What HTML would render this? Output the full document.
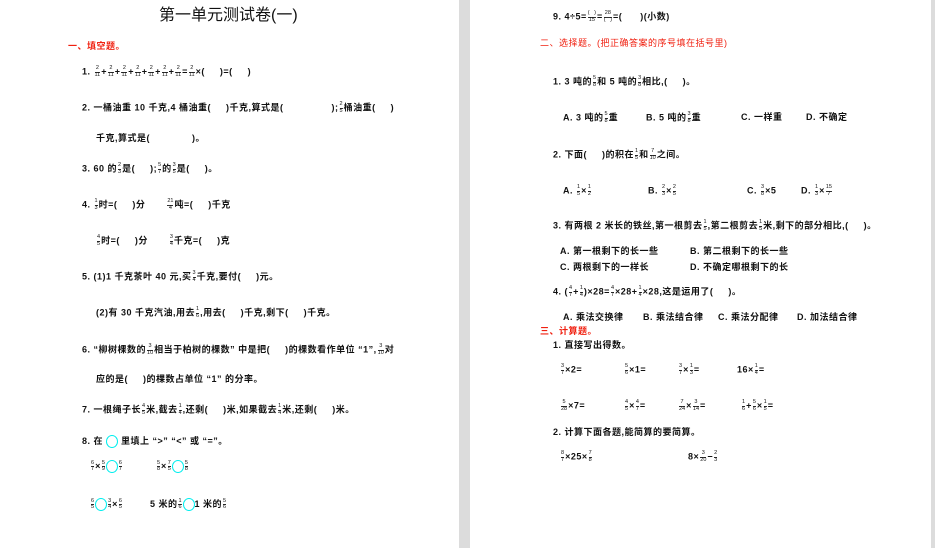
<!DOCTYPE html>
<html><head><meta charset="utf-8"><style>
body{margin:0;width:935px;height:548px;background:#dcdcdc;position:relative;overflow:hidden;font-family:"Liberation Sans","Noto Sans CJK SC",sans-serif;color:#111}
.pg{position:absolute;top:0;background:#fff;height:548px}
.t{position:absolute;font-size:9px;letter-spacing:0.5px;white-space:nowrap;line-height:11px;font-weight:bold}
.r{color:#f02010}
.f{display:inline-block;vertical-align:middle;font-size:5.5px;line-height:5.5px;text-align:center;margin:0 1px;font-weight:normal;letter-spacing:0}
.f b{display:block;font-weight:normal;border-bottom:0.5px solid #333}
.f i{display:block;font-style:normal}
.c{display:inline-block;width:12px;height:13px;border:1.5px solid #0ee;border-radius:50%;vertical-align:middle;box-sizing:border-box}
</style></head><body>
<div class="pg" style="left:0;width:459px"></div>
<div class="pg" style="left:470px;width:461px"></div>

<div class="t" style="left:159px;top:6px;font-size:16px;line-height:20px;font-weight:normal;letter-spacing:0">第一单元测试卷(一)</div>
<div class="t r" style="left:68px;top:41px">一、填空题。</div>
<div class="t" style="left:82px;top:66px">1. <span class="f"><b>2</b><i>11</i></span>+<span class="f"><b>2</b><i>11</i></span>+<span class="f"><b>2</b><i>11</i></span>+<span class="f"><b>2</b><i>11</i></span>+<span class="f"><b>2</b><i>11</i></span>+<span class="f"><b>2</b><i>11</i></span>+<span class="f"><b>2</b><i>11</i></span>=<span class="f"><b>2</b><i>11</i></span>×(&nbsp;&nbsp;&nbsp;&nbsp;&nbsp;)=(&nbsp;&nbsp;&nbsp;&nbsp;&nbsp;)</div>
<div class="t" style="left:82px;top:102px">2. 一桶油重 10 千克,4 桶油重(&nbsp;&nbsp;&nbsp;&nbsp;&nbsp;)千克,算式是(&nbsp;&nbsp;&nbsp;&nbsp;&nbsp;&nbsp;&nbsp;&nbsp;&nbsp;&nbsp;&nbsp;&nbsp;&nbsp;&nbsp;&nbsp;&nbsp;);<span class="f"><b>2</b><i>5</i></span>桶油重(&nbsp;&nbsp;&nbsp;&nbsp;&nbsp;)</div>
<div class="t" style="left:96px;top:133px">千克,算式是(&nbsp;&nbsp;&nbsp;&nbsp;&nbsp;&nbsp;&nbsp;&nbsp;&nbsp;&nbsp;&nbsp;&nbsp;&nbsp;&nbsp;)。</div>
<div class="t" style="left:82px;top:163px">3. 60 的<span class="f"><b>2</b><i>3</i></span>是(&nbsp;&nbsp;&nbsp;&nbsp;&nbsp;);<span class="f"><b>5</b><i>7</i></span>的<span class="f"><b>3</b><i>5</i></span>是(&nbsp;&nbsp;&nbsp;&nbsp;&nbsp;)。</div>
<div class="t" style="left:82px;top:199px">4. <span class="f"><b>1</b><i>3</i></span>时=(&nbsp;&nbsp;&nbsp;&nbsp;&nbsp;)分&nbsp;&nbsp;&nbsp;&nbsp;&nbsp;&nbsp;&nbsp;<span class="f"><b>21</b><i>4</i></span>吨=(&nbsp;&nbsp;&nbsp;&nbsp;&nbsp;)千克</div>
<div class="t" style="left:96px;top:235px"><span class="f"><b>4</b><i>5</i></span>时=(&nbsp;&nbsp;&nbsp;&nbsp;&nbsp;)分&nbsp;&nbsp;&nbsp;&nbsp;&nbsp;&nbsp;&nbsp;<span class="f"><b>3</b><i>4</i></span>千克=(&nbsp;&nbsp;&nbsp;&nbsp;&nbsp;)克</div>
<div class="t" style="left:82px;top:271px">5. (1)1 千克茶叶 40 元,买<span class="f"><b>3</b><i>4</i></span>千克,要付(&nbsp;&nbsp;&nbsp;&nbsp;&nbsp;)元。</div>
<div class="t" style="left:96px;top:307px">(2)有 30 千克汽油,用去<span class="f"><b>1</b><i>6</i></span>,用去(&nbsp;&nbsp;&nbsp;&nbsp;&nbsp;)千克,剩下(&nbsp;&nbsp;&nbsp;&nbsp;&nbsp;)千克。</div>
<div class="t" style="left:82px;top:344px">6. “柳树棵数的<span class="f"><b>3</b><i>10</i></span>相当于柏树的棵数” 中是把(&nbsp;&nbsp;&nbsp;&nbsp;&nbsp;)的棵数看作单位 “1”,<span class="f"><b>3</b><i>10</i></span>对</div>
<div class="t" style="left:96px;top:374px">应的是(&nbsp;&nbsp;&nbsp;&nbsp;&nbsp;)的棵数占单位 “1” 的分率。</div>
<div class="t" style="left:82px;top:404px">7. 一根绳子长<span class="f"><b>4</b><i>5</i></span>米,截去<span class="f"><b>1</b><i>4</i></span>,还剩(&nbsp;&nbsp;&nbsp;&nbsp;&nbsp;)米,如果截去<span class="f"><b>1</b><i>4</i></span>米,还剩(&nbsp;&nbsp;&nbsp;&nbsp;&nbsp;)米。</div>
<div class="t" style="left:82px;top:435px">8. 在 <span class="c"></span> 里填上 “&gt;” “&lt;” 或 “=”。</div>
<div class="t" style="left:90px;top:460px"><span class="f"><b>6</b><i>7</i></span>×<span class="f"><b>5</b><i>9</i></span><span class="c"></span><span class="f"><b>6</b><i>7</i></span>&nbsp;&nbsp;&nbsp;&nbsp;&nbsp;&nbsp;&nbsp;&nbsp;&nbsp;&nbsp;&nbsp;<span class="f"><b>5</b><i>8</i></span>×<span class="f"><b>7</b><i>5</i></span><span class="c"></span><span class="f"><b>5</b><i>8</i></span></div>
<div class="t" style="left:90px;top:498px"><span class="f"><b>6</b><i>5</i></span><span class="c"></span><span class="f"><b>3</b><i>4</i></span>×<span class="f"><b>6</b><i>5</i></span>&nbsp;&nbsp;&nbsp;&nbsp;&nbsp;&nbsp;&nbsp;&nbsp;&nbsp;5 米的<span class="f"><b>1</b><i>6</i></span><span class="c"></span>1 米的<span class="f"><b>5</b><i>6</i></span></div>

<div class="t" style="left:553px;top:11px">9. 4÷5=<span class="f"><b>(&nbsp;&nbsp;&nbsp;)</b><i>15</i></span>=<span class="f"><b>28</b><i>(&nbsp;&nbsp;&nbsp;)</i></span>=(&nbsp;&nbsp;&nbsp;&nbsp;&nbsp;&nbsp;)(小数)</div>
<div class="t r" style="left:540px;top:38px;font-weight:normal">二、选择题。(把正确答案的序号填在括号里)</div>
<div class="t" style="left:553px;top:76px">1. 3 吨的<span class="f"><b>5</b><i>8</i></span>和 5 吨的<span class="f"><b>3</b><i>8</i></span>相比,(&nbsp;&nbsp;&nbsp;&nbsp;&nbsp;)。</div>
<div class="t" style="left:563px;top:112px">A. 3 吨的<span class="f"><b>5</b><i>8</i></span>重</div>
<div class="t" style="left:646px;top:112px">B. 5 吨的<span class="f"><b>3</b><i>8</i></span>重</div>
<div class="t" style="left:741px;top:112px">C. 一样重</div>
<div class="t" style="left:806px;top:112px">D. 不确定</div>
<div class="t" style="left:553px;top:149px">2. 下面(&nbsp;&nbsp;&nbsp;&nbsp;&nbsp;)的积在<span class="f"><b>1</b><i>5</i></span>和<span class="f"><b>7</b><i>10</i></span>之间。</div>
<div class="t" style="left:563px;top:185px">A. <span class="f"><b>1</b><i>5</i></span>×<span class="f"><b>1</b><i>2</i></span></div>
<div class="t" style="left:648px;top:185px">B. <span class="f"><b>2</b><i>3</i></span>×<span class="f"><b>2</b><i>5</i></span></div>
<div class="t" style="left:747px;top:185px">C. <span class="f"><b>3</b><i>8</i></span>×5</div>
<div class="t" style="left:801px;top:185px">D. <span class="f"><b>1</b><i>3</i></span>×<span class="f"><b>15</b><i>7</i></span></div>
<div class="t" style="left:553px;top:220px">3. 有两根 2 米长的铁丝,第一根剪去<span class="f"><b>1</b><i>5</i></span>,第二根剪去<span class="f"><b>1</b><i>5</i></span>米,剩下的部分相比,(&nbsp;&nbsp;&nbsp;&nbsp;&nbsp;)。</div>
<div class="t" style="left:560px;top:246px">A. 第一根剩下的长一些</div>
<div class="t" style="left:690px;top:246px">B. 第二根剩下的长一些</div>
<div class="t" style="left:560px;top:262px">C. 两根剩下的一样长</div>
<div class="t" style="left:690px;top:262px">D. 不确定哪根剩下的长</div>
<div class="t" style="left:553px;top:286px">4. (<span class="f"><b>4</b><i>7</i></span>+<span class="f"><b>1</b><i>4</i></span>)×28=<span class="f"><b>4</b><i>7</i></span>×28+<span class="f"><b>1</b><i>4</i></span>×28,这是运用了(&nbsp;&nbsp;&nbsp;&nbsp;&nbsp;)。</div>
<div class="t" style="left:563px;top:312px">A. 乘法交换律</div>
<div class="t" style="left:643px;top:312px">B. 乘法结合律</div>
<div class="t" style="left:718px;top:312px">C. 乘法分配律</div>
<div class="t" style="left:797px;top:312px">D. 加法结合律</div>
<div class="t r" style="left:540px;top:326px">三、计算题。</div>
<div class="t" style="left:553px;top:340px">1. 直接写出得数。</div>
<div class="t" style="left:560px;top:364px"><span class="f"><b>3</b><i>7</i></span>×2=</div>
<div class="t" style="left:624px;top:364px"><span class="f"><b>5</b><i>6</i></span>×1=</div>
<div class="t" style="left:678px;top:364px"><span class="f"><b>3</b><i>7</i></span>×<span class="f"><b>1</b><i>3</i></span>=</div>
<div class="t" style="left:737px;top:364px">16×<span class="f"><b>1</b><i>4</i></span>=</div>
<div class="t" style="left:560px;top:400px"><span class="f"><b>5</b><i>28</i></span>×7=</div>
<div class="t" style="left:624px;top:400px"><span class="f"><b>4</b><i>5</i></span>×<span class="f"><b>4</b><i>7</i></span>=</div>
<div class="t" style="left:678px;top:400px"><span class="f"><b>7</b><i>24</i></span>×<span class="f"><b>3</b><i>14</i></span>=</div>
<div class="t" style="left:741px;top:400px"><span class="f"><b>1</b><i>6</i></span>+<span class="f"><b>5</b><i>6</i></span>×<span class="f"><b>1</b><i>5</i></span>=</div>
<div class="t" style="left:553px;top:427px">2. 计算下面各题,能简算的要简算。</div>
<div class="t" style="left:560px;top:451px"><span class="f"><b>8</b><i>7</i></span>×25×<span class="f"><b>7</b><i>8</i></span></div>
<div class="t" style="left:688px;top:451px">8×<span class="f"><b>3</b><i>20</i></span>−<span class="f"><b>2</b><i>3</i></span></div>
</body></html>
